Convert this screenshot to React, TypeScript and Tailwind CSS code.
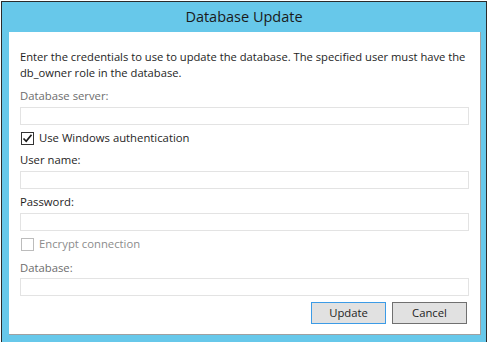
import React from 'react';

const font = { fontFamily: '"Segoe UI", "Open Sans", Arial, sans-serif' };

function Field({ label, muted }: { label: string; muted?: boolean }) {
  return (
    <>
      <div className={`h-[16px] leading-[16px] ${muted ? 'text-[#6d6d6d]' : 'text-[#1e1e1e]'}`}>{label}</div>
      <div className="mt-[3px] h-[18px] border border-[#e3e3e3] bg-white" />
    </>
  );
}

function Check({ label, checked, disabled }: { label: string; checked?: boolean; disabled?: boolean }) {
  return (
    <div className="flex h-[16px] items-center">
      <div
        className={`ml-[1px] flex h-[13px] w-[13px] items-center justify-center border bg-white ${
          disabled ? 'border-[#bcbcbc]' : 'border-[#333333]'
        }`}
      >
        {checked && (
          <svg width="11" height="11" viewBox="0 0 11 11">
            <path d="M1.5 5.5 L4.2 8.3 L9.5 1.8" fill="none" stroke="#1a1a1a" strokeWidth="1.7" />
          </svg>
        )}
      </div>
      <span className={`ml-[5px] leading-[16px] ${disabled ? 'text-[#8c8c8c]' : 'text-[#1e1e1e]'}`}>{label}</span>
    </div>
  );
}

export default function App() {
  return (
    <div className="h-[342px] w-[489px] overflow-hidden bg-white" style={font}>
      <div className="ml-[1px] mt-[1px] flex h-[341px] w-[486px] flex-col border-l border-r border-t border-[#2b2b2b] bg-[#67c8ea]">
        <div className="flex h-[30px] items-center justify-center pb-[1px] text-[14.5px] text-[#1a1a1a]">Database Update</div>
        <div className="ml-[7px] flex h-[303px] w-[472px] flex-col border-b border-r border-[#a0a0a0] bg-white text-[11.3px]">
          <div className="h-[264px] overflow-hidden px-[11px] pt-[17px]">
            <p className="text-[11.2px] leading-[16px] text-[#1e1e1e]">
              Enter the credentials to use to update the database. The specified user must have the db_owner role in the
              database.
            </p>
            <div className="mt-[7px]">
              <Field label="Database server:" muted />
            </div>
            <div className="mt-[5px]">
              <Check label="Use Windows authentication" checked />
            </div>
            <div className="mt-[6px]">
              <Field label="User name:" />
            </div>
            <div className="mt-[5px]">
              <Field label="Password:" />
            </div>
            <div className="mt-[5px]">
              <Check label="Encrypt connection" disabled />
            </div>
            <div className="mt-[8px]">
              <div className="h-[16px] leading-[16px] text-[#6d6d6d]">Database:</div>
              <div className="mt-[2px] h-[18px] border border-[#e3e3e3] bg-white" />
            </div>
          </div>
          <div className="flex justify-end gap-[6px] pr-[13px] pt-[6px]">
            <button className="h-[22px] w-[75px] border border-[#3c9be6] bg-[#e1e1e1] text-[11.3px] text-[#1e1e1e]">
              Update
            </button>
            <button className="h-[22px] w-[75px] border border-[#707070] bg-[#e1e1e1] text-[11.3px] text-[#1e1e1e]">
              Cancel
            </button>
          </div>
        </div>
      </div>
    </div>
  );
}
